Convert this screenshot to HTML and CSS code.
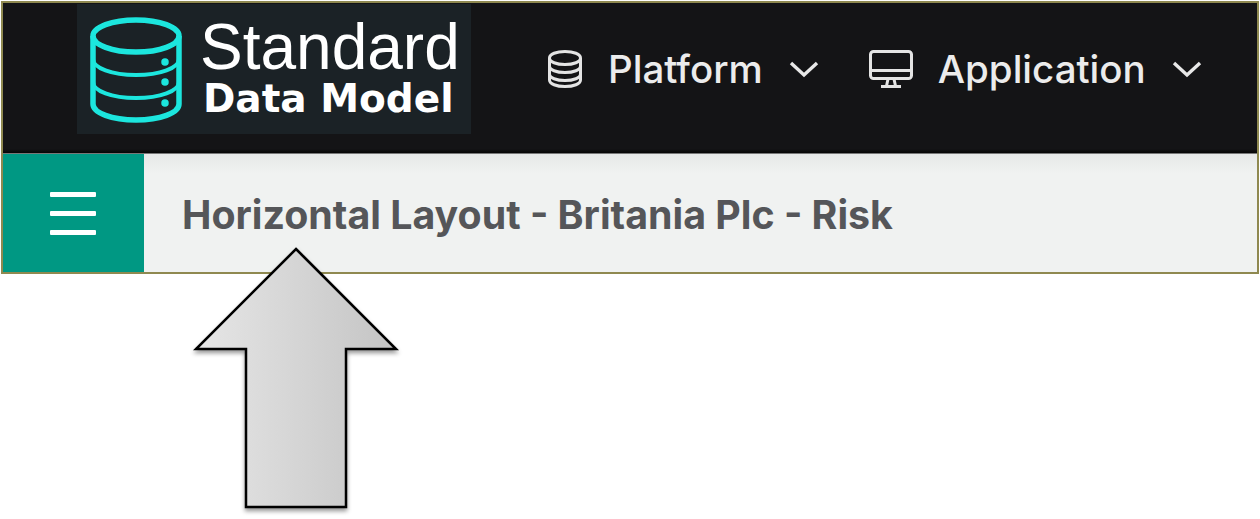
FILE: index.html
```html
<!DOCTYPE html>
<html>
  <head>
    <title>Horizontal Layout - Britania Plc - Risk</title>
    <link rel="stylesheet" href="styles.css">
  </head>
  <body>
    <div class="frame">
      <header class="topbar">
        <div class="logo">
          <svg class="logo-icon" width="94" height="108" viewBox="0 0 94 108" fill="none" stroke="#1ce6de" stroke-width="5.5">
            <ellipse cx="47" cy="20" rx="43" ry="16" />
            <path d="M4 20V88C4 97 23 104 47 104S90 97 90 88V20" />
            <path d="M4 43C4 52 23 59 47 59S90 52 90 43" stroke-width="4" />
            <path d="M4 66C4 75 23 82 47 82S90 75 90 66" stroke-width="4" />
            <circle cx="76" cy="46" r="3" fill="#1ce6de" stroke-width="1.5" />
            <circle cx="76" cy="66" r="3" fill="#1ce6de" stroke-width="1.5" />
            <circle cx="76" cy="87" r="3" fill="#1ce6de" stroke-width="1.5" />
          </svg>
          <div class="logo-text">
            <div class="logo-top">Standard</div>
            <div class="logo-bottom">Data Model</div>
          </div>
        </div>
        <nav class="nav">
          <div class="nav-item">
            <svg class="nav-icon" width="36" height="38" viewBox="0 0 36 38" fill="none" stroke="#e4e4e4" stroke-width="3">
              <path d="M2.500 8C2.500 4 9.500 1.500 18 1.500S33.500 4 33.500 8V30C33.500 34 26.500 36.500 18 36.500S2.500 34 2.500 30Z" />
              <path d="M2.500 8C2.500 12 9.500 14.500 18 14.500S33.500 12 33.500 8" />
              <path d="M2.500 16C2.500 20 9.500 22.500 18 22.500S33.500 20 33.500 16" />
              <path d="M2.500 24C2.500 28 9.500 30.500 18 30.500S33.500 28 33.500 24" />
            </svg>
            <span class="nav-label">Platform</span>
            <svg class="nav-chevron" width="30" height="18" viewBox="0 0 30 18" fill="none" stroke="#e8e8e8" stroke-width="3.400">
              <path d="M2 3L15 15L28 3" />
            </svg>
          </div>
          <div class="nav-item">
            <svg class="nav-icon" width="44" height="38" viewBox="0 0 44 38" fill="none" stroke="#e4e4e4" stroke-width="3">
              <rect x="1.500" y="1.500" width="41" height="27" rx="3" />
              <path d="M1.500 20.500H42.500" />
              <path d="M19 29L17.500 36M25 29L26.500 36" />
              <path d="M12 36.500H32" />
            </svg>
            <span class="nav-label">Application</span>
            <svg class="nav-chevron" width="30" height="18" viewBox="0 0 30 18" fill="none" stroke="#e8e8e8" stroke-width="3.400">
              <path d="M2 3L15 15L28 3" />
            </svg>
          </div>
        </nav>
      </header>
      <div class="subbar">
        <div class="menu-button">
          <span class="menu-line"></span>
          <span class="menu-line"></span>
          <span class="menu-line"></span>
        </div>
        <h1 class="page-title">Horizontal Layout - Britania Plc - Risk</h1>
      </div>
    </div>
    <svg class="arrow" width="220" height="275" viewBox="0 0 220 275">
      <defs>
        <linearGradient id="arrowFill" x1="0" y1="0" x2="1" y2="0">
          <stop offset="0" stop-color="#e6e6e6" />
          <stop offset="1" stop-color="#c4c4c4" />
        </linearGradient>
        <filter id="arrowShadow" x="-10%" y="-10%" width="120%" height="120%">
          <feDropShadow dx="0" dy="3" stdDeviation="2" flood-color="#000" flood-opacity="0.4" />
        </filter>
      </defs>
      <path d="M106 5L206 105H156V263H56V105H6Z" fill="url(#arrowFill)" stroke="#000" stroke-width="2.500" stroke-linejoin="miter" filter="url(#arrowShadow)" />
    </svg>
  </body>
</html>
```

FILE: styles.css
```css
html, body {
  margin: 0;
  padding: 0;
  background-color: #fff;
}
body {
  width: 1260px;
  height: 519px;
  overflow: hidden;
  position: relative;
  font-family: 'Inter', sans-serif;
}
.frame {
  width: 1258px;
  height: 273px;
  margin: 1px 1px 0;
  box-sizing: border-box;
  border: 2px solid #8f8950;
  display: flex;
  flex-direction: column;
}
.topbar {
  height: 150px;
  display: flex;
  align-items: flex-start;
  background: linear-gradient(#141416 146px, #050505);
  border-bottom: 1px solid #777;
}
.logo {
  width: 394px;
  height: 130px;
  margin-left: 74px;
  margin-top: 1px;
  background-color: #1b2226;
  display: flex;
  align-items: center;
  padding-left: 12px;
  box-sizing: border-box;
}
.logo-icon {
  margin-top: 1px;
}
.logo-text {
  margin-left: 17px;
  color: #fff;
}
.logo-top {
  font-family: 'Liberation Sans', sans-serif;
  font-size: 64px;
  line-height: 60px;
  margin-top: -3px;
}
.logo-bottom {
  font-family: 'DejaVu Sans', sans-serif;
  font-size: 39px;
  font-weight: 700;
  line-height: 40px;
  margin-top: 2px;
  margin-left: 3px;
  white-space: nowrap;
}
.nav {
  display: flex;
  margin-left: 76px;
  margin-top: 46px;
  gap: 50px;
}
.nav-item {
  display: flex;
  align-items: center;
  height: 40px;
  color: #ececec;
}
.nav-label {
  font-size: 38.500px;
  font-weight: 500;
  margin-left: 25px;
  margin-right: 26px;
}
.subbar {
  flex: 1;
  display: flex;
  align-items: center;
  background: linear-gradient(#e6e8e7, #f0f2f1 20px);
}
.menu-button {
  width: 141px;
  align-self: stretch;
  background-color: #009883;
  display: flex;
  flex-direction: column;
  justify-content: center;
  align-items: center;
  gap: 14px;
  padding-right: 2px;
  box-sizing: border-box;
}
.menu-line {
  width: 46px;
  height: 5px;
  background-color: #fff;
  border-radius: 1px;
}
.page-title {
  margin: 3px 0 0 38px;
  font-size: 39.350px;
  font-weight: 700;
  color: #555659;
}
.arrow {
  position: absolute;
  left: 190px;
  top: 244px;
}
```
